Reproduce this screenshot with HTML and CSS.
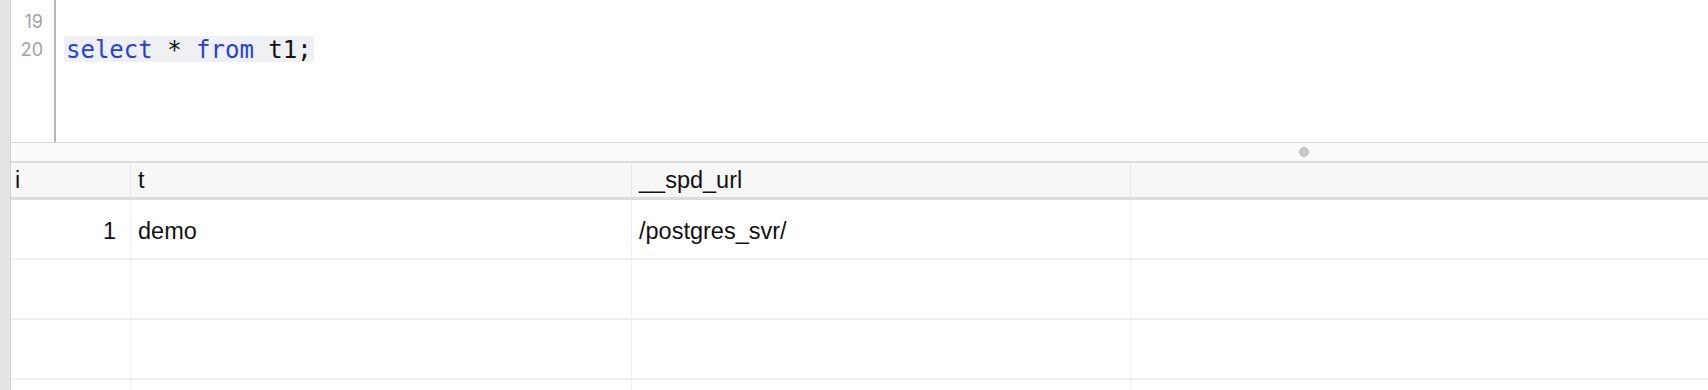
FILE: index.html
```html
<!DOCTYPE html>
<html>
<head>
<meta charset="utf-8">
<link rel="stylesheet" href="styles.css">
</head>
<body>
<div class="app">
  <div class="strip"></div>
  <div class="main">
    <div class="editor">
      <div class="gutter">
        <div class="lines">
          <div class="ln">18</div>
          <div class="ln">19</div>
          <div class="ln">20</div>
        </div>
      </div>
      <div class="code">
        <div class="lines">
          <div class="cl"></div>
          <div class="cl"></div>
          <div class="cl"><span class="hl"><span class="kw">select</span> * <span class="kw">from</span> t1;</span></div>
        </div>
      </div>
    </div>
    <div class="splitter"><span class="dot"></span></div>
    <div class="table">
      <div class="th">i</div>
      <div class="th">t</div>
      <div class="th">__spd_url</div>
      <div class="th last"></div>

      <div class="td num">1</div>
      <div class="td">demo</div>
      <div class="td">/postgres_svr/</div>
      <div class="td last"></div>

      <div class="td"></div>
      <div class="td"></div>
      <div class="td"></div>
      <div class="td last"></div>

      <div class="td"></div>
      <div class="td"></div>
      <div class="td"></div>
      <div class="td last"></div>

      <div class="td"></div>
      <div class="td"></div>
      <div class="td"></div>
      <div class="td last"></div>
    </div>
  </div>
</div>
</body>
</html>
```

FILE: styles.css
```css
html, body {
  margin: 0;
  padding: 0;
  background: #ffffff;
  overflow: hidden;
}

.app {
  display: flex;
  width: 1708px;
  height: 390px;
  overflow: hidden;
}

.strip {
  width: 10px;
  flex: none;
  background: #e4e4e4;
  border-right: 1px solid #d2d2d2;
}

.main {
  flex: 1;
  display: flex;
  flex-direction: column;
  min-width: 0;
}

.editor {
  height: 142px;
  flex: none;
  display: flex;
  overflow: hidden;
  border-bottom: 1px solid #d9d9d9;
}

.lines {
  margin-top: -20px;
}

.gutter {
  flex: none;
  border-right: 2px solid #b8b8b8;
  box-sizing: border-box;
  width: 45px;
  padding-right: 11px;
}

.ln {
  height: 28px;
  line-height: 28px;
  text-align: right;
  font-family: "Inter", "DejaVu Sans", sans-serif;
  font-size: 18px;
  color: #a3a3a3;
}

.code {
  flex: 1;
  padding-left: 8px;
}

.cl {
  height: 28px;
  line-height: 28px;
  font-family: "DejaVu Sans Mono", "Liberation Mono", monospace;
  font-size: 24px;
  color: #111111;
  white-space: pre;
}

.hl {
  display: inline-block;
  height: 26px;
  line-height: 28px;
  padding: 0 2px 0 2px;
  background: #eef0f4;
  vertical-align: top;
}

.kw {
  color: #2740dc;
}

.splitter {
  height: 18px;
  flex: none;
  background: #fafafa;
  display: flex;
  align-items: center;
  padding-left: 1288px;
}

.dot {
  width: 10px;
  height: 10px;
  border-radius: 50%;
  background: #cacaca;
  border: 1px solid #bdbdbd;
  box-sizing: border-box;
}

.table {
  display: grid;
  grid-template-columns: 120px 501px 499px 1fr;
  grid-auto-rows: 60px;
  grid-template-rows: 39px;
  font-family: "Liberation Sans", Arial, sans-serif;
  font-size: 23.5px;
  color: #111111;
}

.th {
  background: #f7f7f7;
  border-top: 2px solid #dcdcdc;
  border-bottom: 3px solid #dcdcdc;
  border-right: 1px solid #e6e6e6;
  box-sizing: border-box;
  display: flex;
  align-items: center;
  padding-left: 7px;
  padding-top: 1px;
}

.th:first-child {
  padding-left: 4px;
}

.td {
  border-bottom: 2px solid #efefef;
  border-right: 1px solid #f0f0f0;
  box-sizing: border-box;
  display: flex;
  align-items: center;
  padding-left: 7px;
  padding-top: 4px;
}

.td.num {
  justify-content: flex-end;
  padding-left: 0;
  padding-right: 14px;
}

.last {
  border-right: none;
}
```
